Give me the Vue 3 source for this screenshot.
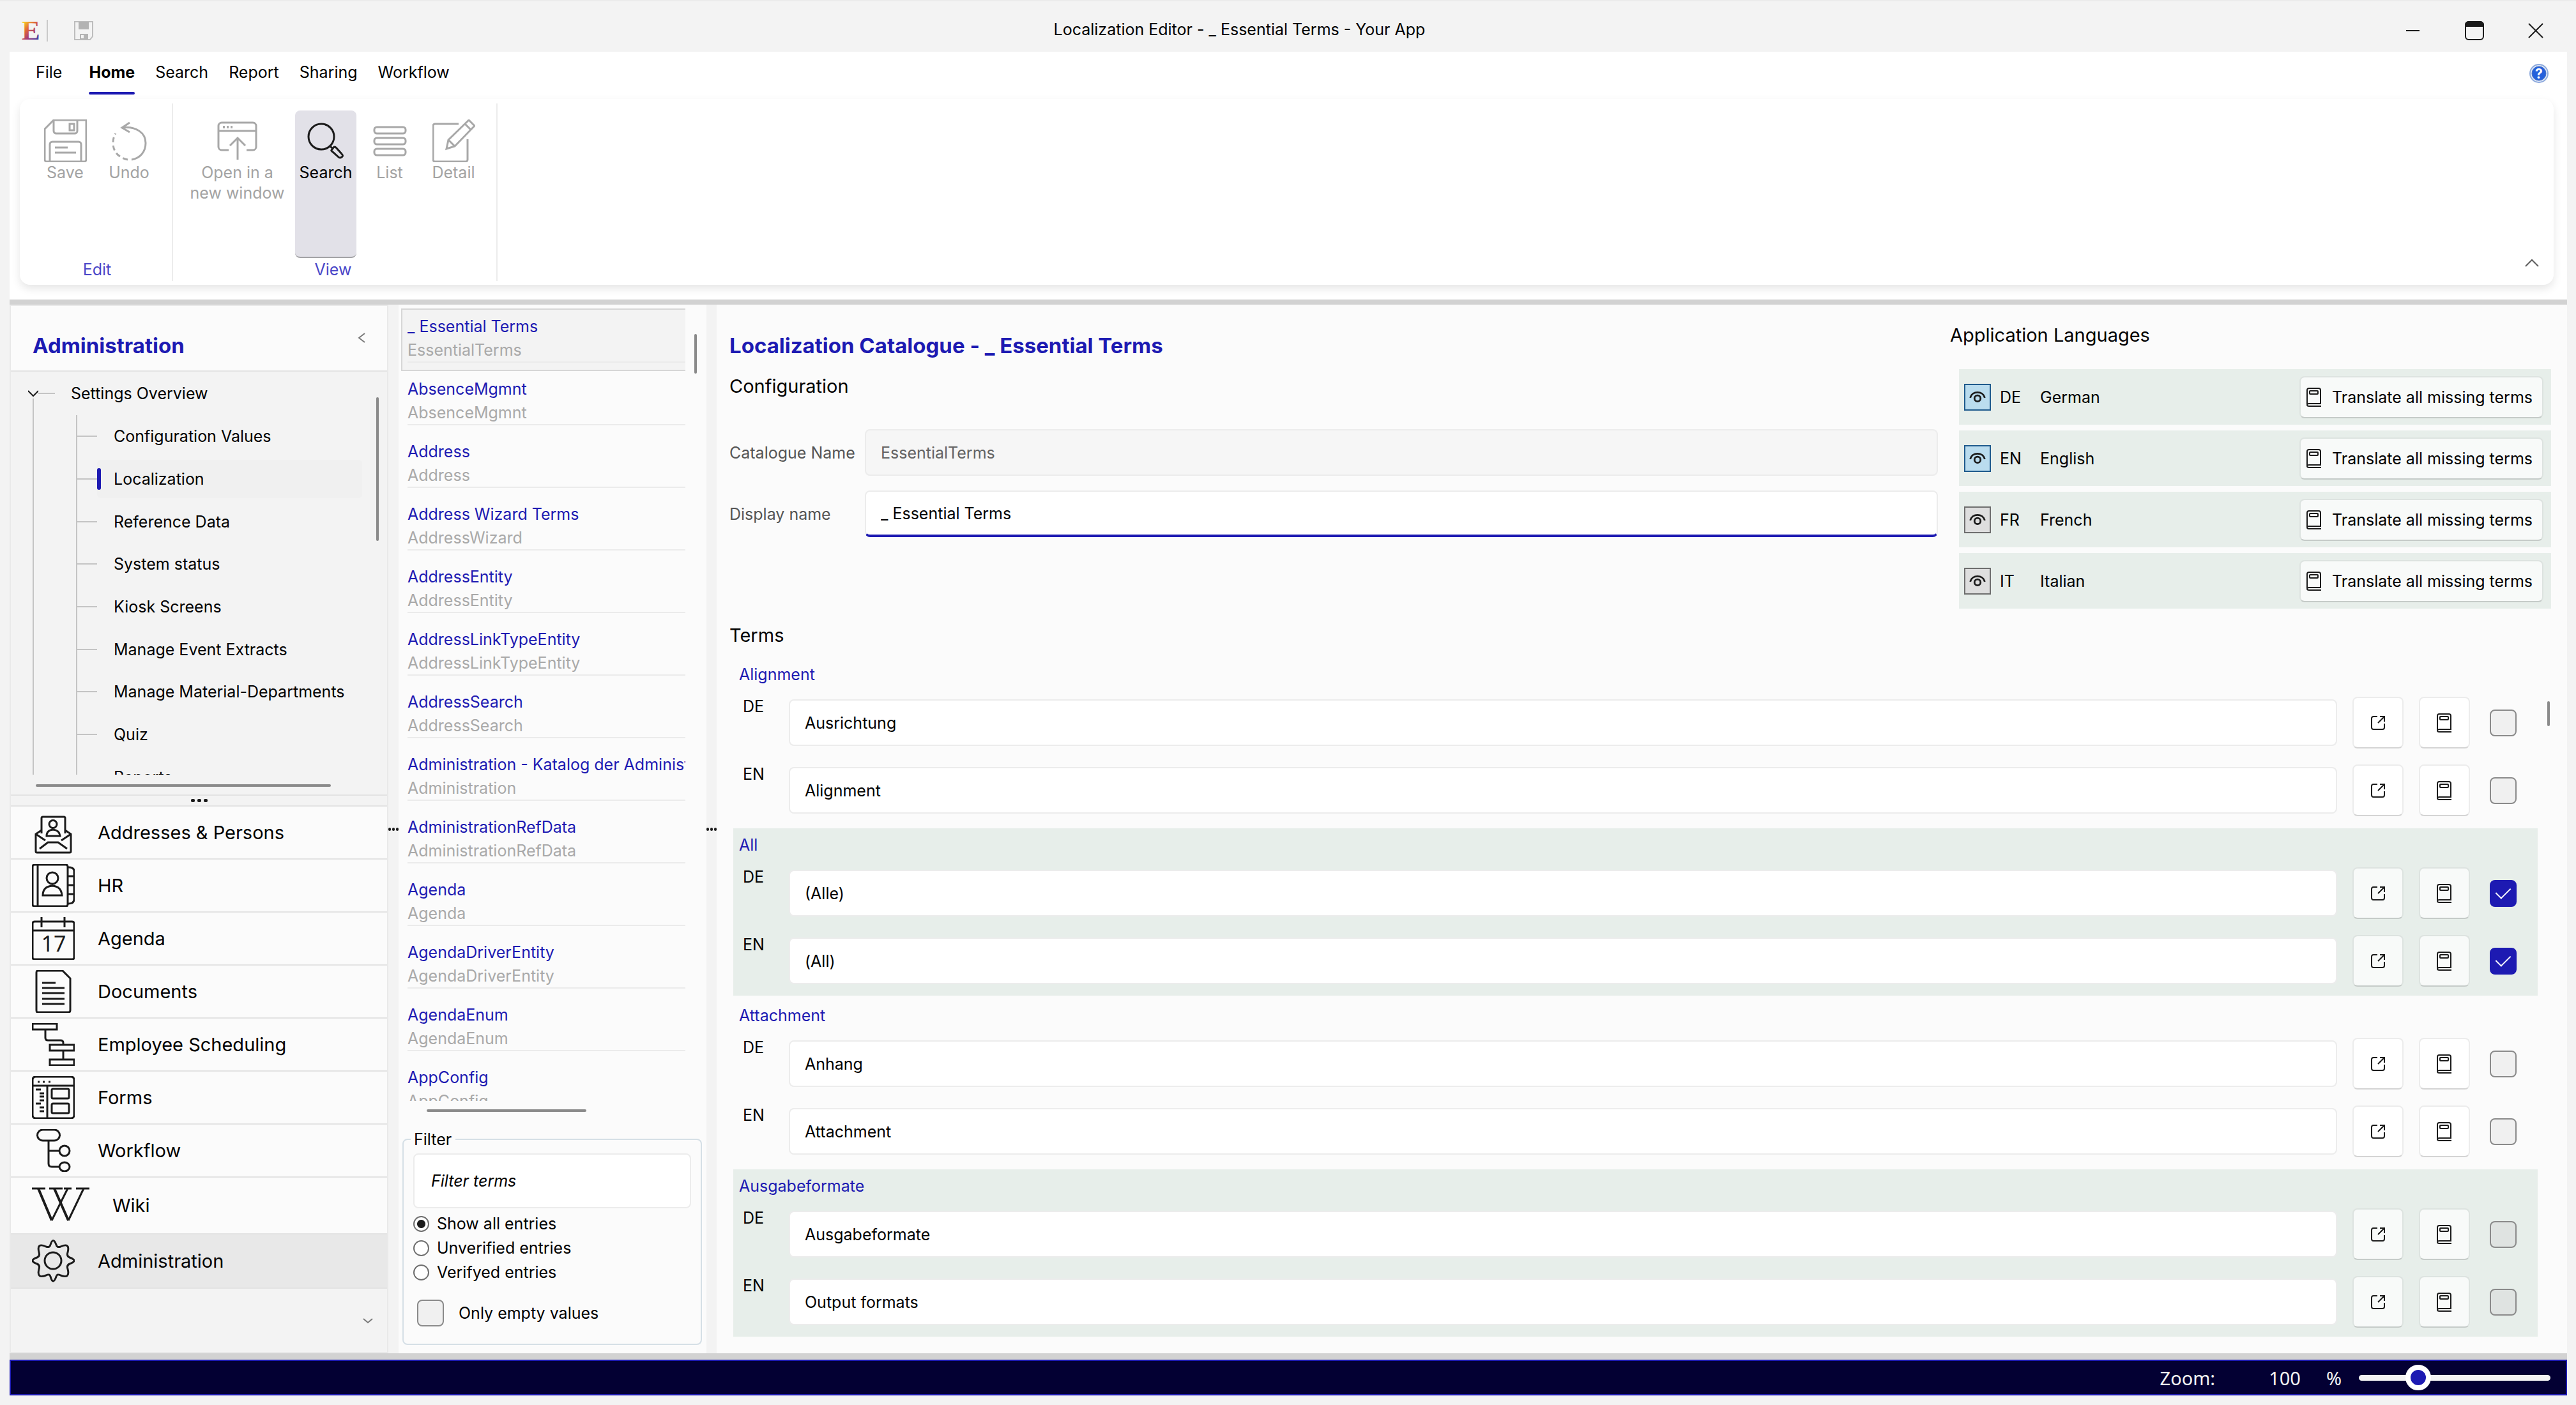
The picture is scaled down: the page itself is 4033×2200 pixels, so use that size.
<template>
  <div class="window">
    <header class="titlebar">
      <svg class="logo" viewBox="0 0 30 30" aria-hidden="true">
        <defs>
          <linearGradient id="logo-fill" gradientUnits="userSpaceOnUse" x1="2" y1="2" x2="28" y2="30">
            <stop offset="0" stop-color="#f9d423" />
            <stop offset="0.35" stop-color="#e0653a" />
            <stop offset="0.65" stop-color="#a03a7c" />
            <stop offset="1" stop-color="#2b3fa8" />
          </linearGradient>
        </defs>
        <text x="1" y="29" class="logo-letter" fill="url(#logo-fill)">E</text>
      </svg>
      <span class="titlebar-sep"></span>
      <button class="quick-save" aria-label="Save">
        <svg viewBox="0 0 30 30">
          <path d="M1 1h28v23l-4 5H1z" fill="none" stroke="#bdbdbd" stroke-width="2" />
          <path d="M7 1h16v12H7z M9 20h13v9H9z" fill="#b3b3b3" stroke="none" />
          <path d="M11 22h4v5h-4z" fill="#f3f3f3" stroke="none" />
        </svg>
      </button>
      <h1 class="window-title">Localization Editor - _ Essential Terms - Your App</h1>
      <div class="window-buttons">
        <button aria-label="Minimize">
          <svg viewBox="0 0 30 30"><path d="M4 15h21" /></svg>
        </button>
        <button aria-label="Maximize">
          <svg viewBox="0 0 30 30">
            <rect x="1" y="1" width="28" height="28" rx="5" />
            <path d="M1 8V6a5 5 0 0 1 5-5h18a5 5 0 0 1 5 5v2z" fill="#1b1b1b" />
          </svg>
        </button>
        <button aria-label="Close">
          <svg viewBox="0 0 30 30"><path d="M4 4l22 22M26 4L4 26" /></svg>
        </button>
      </div>
    </header>

    <section class="ribbon">
      <nav class="tabs">
        <button
          v-for="tab in tabs"
          :key="tab"
          :class="['tab', { 'tab--file': tab === 'File', 'tab--active': tab === activeTab }]"
          @click="activeTab = tab"
        >{{ tab }}</button>
        <button class="help" aria-label="Help">
          <svg viewBox="0 0 30 30">
            <circle cx="15" cy="15" r="14" fill="#dfe9f8" stroke="#8eaadd" stroke-width="2" />
            <circle cx="15" cy="15" r="11" fill="#2460dc" stroke="#4d74c4" stroke-width="1" />
            <text x="15" y="23" text-anchor="middle" class="help-mark">?</text>
          </svg>
        </button>
      </nav>
      <div class="ribbon-card">
        <div class="group">
          <div class="tools">
            <button class="tool" disabled>
              <svg viewBox="0 0 67 67">
                <path d="M15 1H65a1 1 0 0 1 1 1V63a3 3 0 0 1-3 3H4a3 3 0 0 1-3-3V15z" />
                <path d="M15 1v17a4 4 0 0 0 4 4h29a4 4 0 0 0 4-4V1M40 7h7v10h-7z" />
                <path d="M9 66V39a4 4 0 0 1 4-4h41a4 4 0 0 1 4 4v27M17 44h20M17 52h33" />
              </svg>
              <span>Save</span>
            </button>
            <button class="tool" disabled>
              <svg viewBox="0 0 67 67">
                <path d="M22 13C44 10 59 21 59 37C59 51 50 61 37 63" />
                <path d="M34 5L22 13l12 7" />
                <path d="M31 63C17 60 8 51 8 37C8 31 9 27 12 22" stroke-dasharray="8 5" />
              </svg>
              <span>Undo</span>
            </button>
          </div>
          <span class="group-name">Edit</span>
        </div>
        <div class="group group--view">
          <div class="tools">
            <button class="tool tool--wide" disabled>
              <svg viewBox="0 0 67 67">
                <path d="M20 48H9a5 5 0 0 1-5-5V10a5 5 0 0 1 5-5h49a5 5 0 0 1 5 5v33a5 5 0 0 1-5 5H48" />
                <path d="M4 18h59M34 63V29M22 41l12-12 12 12" />
                <path d="M11 12h3M17 12h3M23 12h3" stroke-width="4" />
              </svg>
              <span>Open in a<br />new window</span>
            </button>
            <button class="tool tool--on">
              <svg viewBox="0 0 67 67">
                <circle cx="26" cy="27" r="20" />
                <path d="M40 42l4 4M42 48l3-4q2-2 5 1l8 9q3 3 0 5t-5 0l-9-8q-3-2-2-3z" />
              </svg>
              <span>Search</span>
            </button>
            <button class="tool" disabled>
              <svg viewBox="0 0 67 67">
                <rect x="9" y="12" width="49" height="10" rx="4" />
                <rect x="9" y="29" width="49" height="10" rx="4" />
                <rect x="9" y="46" width="49" height="10" rx="4" />
              </svg>
              <span>List</span>
            </button>
            <button class="tool" disabled>
              <svg viewBox="0 0 67 67">
                <path d="M41 7H4a3 3 0 0 0-3 3v53a3 3 0 0 0 3 3h48a3 3 0 0 0 3-3V31" />
                <path d="M57 1l9 9-31 32-13 4 3-14zM51 7l9 9M25 32l10 10" />
              </svg>
              <span>Detail</span>
            </button>
          </div>
          <span class="group-name">View</span>
        </div>
        <button class="ribbon-collapse" aria-label="Collapse ribbon">
          <svg viewBox="0 0 24 24"><path d="M2 17L12 7l10 10" /></svg>
        </button>
      </div>
    </section>

    <main class="body">
      <aside class="sidebar">
        <div class="sidebar-head">
          <h2 class="heading">Administration</h2>
          <button aria-label="Collapse panel">
            <svg viewBox="0 0 16 16"><path d="M12 1L3 8l9 7" /></svg>
          </button>
        </div>
        <div class="tree">
          <div class="tree-clip">
            <button class="tree-root">
              <svg viewBox="0 0 16 16"><path d="M0 4l8 8 8-8" /></svg>
              <span>Settings Overview</span>
            </button>
            <ul class="tree-items">
              <li
                v-for="entry in settings"
                :key="entry"
                :class="{ selected: entry === selectedSetting }"
                @click="selectedSetting = entry"
              ><a href="#">{{ entry }}</a></li>
            </ul>
          </div>
          <span class="scroll scroll--tree-y"></span>
          <span class="scroll scroll--tree-x"></span>
        </div>
        <div class="grip"><i></i><i></i><i></i></div>
        <ul class="modules">
          <li
            v-for="mod in modules"
            :key="mod.name"
            :class="{ wiki: mod.name === 'Wiki', current: mod.name === 'Administration' }"
          >
            <a href="#">
              <svg v-if="mod.name === 'Wiki'" class="wiki-icon" viewBox="0 0 90 67">
                <path d="M0 7h21M27 7h21M50 7h12M69 7h21" stroke-width="3" />
                <path d="M10 7l21 50M35 7l22 50" stroke-width="4" />
                <path d="M31 57L56 7M57 57L81 7" stroke-width="3" />
              </svg>
              <svg v-else viewBox="0 0 67 67">
                <path v-for="d in mod.paths" :key="d" :d="d" />
                <text v-if="mod.day" x="34" y="54" text-anchor="middle" class="day">{{ mod.day }}</text>
              </svg>
              <span>{{ mod.name }}</span>
            </a>
          </li>
        </ul>
        <div class="sidebar-foot">
          <button aria-label="More modules">
            <svg viewBox="0 0 16 16"><path d="M1 5l7 6 7-6" /></svg>
          </button>
        </div>
      </aside>

      <div class="splitter"><i></i><i></i><i></i></div>

      <section class="catalogues">
        <ul class="catalogue-list">
          <li
            v-for="cat in catalogues"
            :key="cat.id"
            :class="{ selected: cat.id === selectedCatalogue }"
            @click="selectedCatalogue = cat.id"
          >
            <a href="#" class="cat-title">{{ cat.title }}</a>
            <span class="cat-id">{{ cat.id }}</span>
          </li>
        </ul>
        <div class="list-scroll"><span></span></div>
        <span class="scroll scroll--list-y"></span>
        <fieldset class="filter">
          <legend>Filter</legend>
          <input v-model="filter" class="filter-text" type="text" placeholder="Filter terms" aria-label="Filter terms" />
          <label v-for="mode in modes" :key="mode" class="radio">
            <input v-model="filterMode" type="radio" name="mode" :value="mode" />
            {{ mode }}
          </label>
          <label class="only-empty">
            <input v-model="onlyEmpty" type="checkbox" class="check" />
            Only empty values
          </label>
        </fieldset>
      </section>

      <div class="splitter"><i></i><i></i><i></i></div>

      <section class="editor">
        <div class="editor-top">
          <div class="config">
            <h2 class="heading">Localization Catalogue - _ Essential Terms</h2>
            <h3>Configuration</h3>
            <div class="fields">
              <label for="catalogue-name">Catalogue Name</label>
              <input id="catalogue-name" class="text" type="text" value="EssentialTerms" disabled />
              <label for="display-name">Display name</label>
              <input id="display-name" v-model="displayName" class="text text--focus" type="text" />
            </div>
          </div>
          <div class="languages">
            <h3>Application Languages</h3>
            <ul>
              <li v-for="lang in languages" :key="lang.code">
                <button
                  :class="['eye', { 'eye--on': lang.visible }]"
                  :aria-label="'Show ' + lang.name"
                  @click="lang.visible = !lang.visible"
                >
                  <svg viewBox="0 0 40 40">
                    <path d="M8 21C11 9 29 9 32 21" />
                    <circle cx="20" cy="22" r="5" />
                  </svg>
                </button>
                <span class="code">{{ lang.code }}</span>
                <span class="name">{{ lang.name }}</span>
                <button class="translate">
                  <svg class="book" viewBox="0 0 24 30">
                    <path d="M1 26V4q0-3 3-3h15q3 0 3 3v21H4q-3 0-3 2t3 2h19" />
                    <rect x="5" y="5" width="13" height="5" rx="1" />
                  </svg>
                  Translate all missing terms
                </button>
              </li>
            </ul>
          </div>
        </div>

        <h3 class="terms-title">Terms</h3>
        <div class="terms">
          <div v-for="(term, i) in terms" :key="term.key" :class="['term', { 'term--alt': i % 2 }]">
            <h4>{{ term.key }}</h4>
            <div v-for="row in term.rows" :key="row.lang" class="term-row">
              <label :for="term.key + row.lang">{{ row.lang }}</label>
              <input :id="term.key + row.lang" v-model="row.text" class="text" type="text" />
              <button class="square" aria-label="Open">
                <svg viewBox="0 0 24 24">
                  <path d="M11 2H5Q2 2 2 5v14q0 3 3 3h14q3 0 3-3v-6M15 2h7v8M22 2L12 12" />
                </svg>
              </button>
              <button class="square" aria-label="Translate">
                <svg class="book" viewBox="0 0 24 30">
                  <path d="M1 26V4q0-3 3-3h15q3 0 3 3v21H4q-3 0-3 2t3 2h19" />
                  <rect x="5" y="5" width="13" height="5" rx="1" />
                </svg>
              </button>
              <input v-model="row.verified" class="check" type="checkbox" aria-label="Verified" />
            </div>
          </div>
        </div>
        <span class="scroll scroll--terms"></span>
      </section>
    </main>

    <footer class="status">
      <label for="zoom">Zoom:</label>
      <output class="zoom-value">{{ zoom }}</output>
      <span class="percent">%</span>
      <input id="zoom" v-model="zoom" type="range" min="10" max="330" />
    </footer>
  </div>
</template>

<script setup>
import { ref, reactive } from 'vue';

const tabs = ['File', 'Home', 'Search', 'Report', 'Sharing', 'Workflow'];
const activeTab = ref('Home');

const settings = [
  'Configuration Values',
  'Localization',
  'Reference Data',
  'System status',
  'Kiosk Screens',
  'Manage Event Extracts',
  'Manage Material-Departments',
  'Quiz',
  'Reports',
];
const selectedSetting = ref('Localization');

const modules = [
  {
    name: 'Addresses & Persons',
    paths: [
      'M15 35V11q0-2 2-2h33q2 0 2 2v24',
      'M15 30L6 36v27q0 2 2 2h51q2 0 2-2V36l-9-6',
      'M6 36l15 10M61 36L46 46M12 59l13-10h16l14 10',
      'M27 20.5a6 6 0 1 0 12 0a6 6 0 1 0-12 0M23 39q0-9 10-10q10 1 11 10z',
    ],
  },
  {
    name: 'HR',
    paths: [
      'M4 1h49q3 0 3 3v59q0 3-3 3H4q-3 0-3-3V4q0-3 3-3zM9 1v65',
      'M23 22a9 9 0 1 0 18 0a9 9 0 1 0-18 0M17 49q0-14 15-15q14 1 15 15z',
      'M57 5q9 0 9 6v44q0 7-9 7M57 19h9M57 33h9M57 47h9',
    ],
  },
  {
    name: 'Agenda',
    day: '17',
    paths: ['M4 7h59q3 0 3 3v53q0 3-3 3H4q-3 0-3-3V10q0-3 3-3zM1 21h65', 'M15 0v16M51 0v16'],
  },
  {
    name: 'Documents',
    paths: ['M9 1h39l12 12v50q0 3-3 3H9q-2 0-2-3V4q0-3 2-3z', 'M16 20h21M16 28h35M16 36h35M16 45h35M16 53h35'],
  },
  {
    name: 'Employee Scheduling',
    paths: ['M1 1h38v9H1zM28 34h38v9H28zM28 57h38v9H28z', 'M21 10v13q0 4 4 4h20q4 0 4 4v3M49 43v14'],
  },
  {
    name: 'Forms',
    paths: [
      'M6 1h55q5 0 5 5v55q0 5-5 5H6q-5 0-5-5V6q0-5 5-5zM1 15h65M24 15v51',
      'M9 9h3M17 9h3M26 9h3M6 21h8M12 27h7M12 32h7M12 38h7M6 43h8M12 49h7M12 55h7',
      'M33 20h23q2 0 2 2v11q0 2-2 2H33q-2 0-2-2V22q0-2 2-2zM33 43h23q2 0 2 2v11q0 2-2 2H33q-2 0-2-2V45q0-2 2-2z',
    ],
  },
  {
    name: 'Workflow',
    paths: [
      'M17 1h18a8 8 0 0 1 0 17H17a8 8 0 0 1 0-17z',
      'M26 18v36q0 5 5 5h12M26 34h17',
      'M43 34a8 8 0 1 0 16 0a8 8 0 1 0-16 0M43 59a8 7 0 1 0 16 0a8 7 0 1 0-16 0',
    ],
  },
  { name: 'Wiki' },
  {
    name: 'Administration',
    paths: [
      'M29 8Q33-5 38 8Q39 13 45 11Q60 4 56 20Q54 26 59 28Q73 33 59 38Q54 40 56 46Q60 62 45 56Q39 53 38 58Q33 72 29 58Q28 53 22 56Q7 62 11 46Q13 40 8 38Q-6 33 8 28Q13 26 11 20Q7 4 22 11Q28 13 29 8z',
      'M20 33a13 13 0 1 0 26 0a13 13 0 1 0-26 0',
    ],
  },
];

const catalogues = [
  { title: '_ Essential Terms', id: 'EssentialTerms' },
  { title: 'AbsenceMgmnt', id: 'AbsenceMgmnt' },
  { title: 'Address', id: 'Address' },
  { title: 'Address Wizard Terms', id: 'AddressWizard' },
  { title: 'AddressEntity', id: 'AddressEntity' },
  { title: 'AddressLinkTypeEntity', id: 'AddressLinkTypeEntity' },
  { title: 'AddressSearch', id: 'AddressSearch' },
  { title: 'Administration - Katalog der Administration', id: 'Administration' },
  { title: 'AdministrationRefData', id: 'AdministrationRefData' },
  { title: 'Agenda', id: 'Agenda' },
  { title: 'AgendaDriverEntity', id: 'AgendaDriverEntity' },
  { title: 'AgendaEnum', id: 'AgendaEnum' },
  { title: 'AppConfig', id: 'AppConfig' },
];
const selectedCatalogue = ref('EssentialTerms');

const modes = ['Show all entries', 'Unverified entries', 'Verifyed entries'];
const filterMode = ref('Show all entries');
const filter = ref('');
const onlyEmpty = ref(false);

const displayName = ref('_ Essential Terms');
const zoom = ref(100);

const languages = reactive([
  { code: 'DE', name: 'German', visible: true },
  { code: 'EN', name: 'English', visible: true },
  { code: 'FR', name: 'French', visible: false },
  { code: 'IT', name: 'Italian', visible: false },
]);

const makeTerm = (key, de, en, verified) => ({
  key,
  rows: [
    { lang: 'DE', text: de, verified },
    { lang: 'EN', text: en, verified },
  ],
});

const terms = reactive([
  makeTerm('Alignment', 'Ausrichtung', 'Alignment', false),
  makeTerm('All', '(Alle)', '(All)', true),
  makeTerm('Attachment', 'Anhang', 'Attachment', false),
  makeTerm('Ausgabeformate', 'Ausgabeformate', 'Output formats', false),
]);
</script>

<style>
body {
  margin: 0;
  background: #f3f3f3;
}
</style>

<style scoped>
* {
  box-sizing: border-box;
}

.window {
  display: flex;
  flex-direction: column;
  height: 100vh;
  padding: 0 14px 15px 15px;
  border-top: 2px solid #ebebeb;
  background: #f3f3f3;
  color: #000;
  font-family: Inter, "Liberation Sans", sans-serif;
  font-size: 25px;
}

button,
input {
  font: inherit;
  color: inherit;
}

button {
  padding: 0;
  border: none;
  background: none;
  cursor: pointer;
}

ul,
h1,
h2,
h3,
h4 {
  margin: 0;
  padding: 0;
  list-style: none;
}

a {
  color: inherit;
  text-decoration: none;
}

svg {
  display: block;
  flex: none;
  fill: none;
  stroke: #1b1b1b;
  stroke-width: 2;
}

/* title bar */
.titlebar {
  display: flex;
  flex: none;
  align-items: center;
  height: 79px;
  padding: 12px 34px 0 18px;
}

.logo {
  width: 30px;
  height: 30px;
  overflow: visible;
  stroke: none;
}

.logo-letter {
  font-family: "Liberation Serif", serif;
  font-size: 43px;
  font-weight: bold;
}

.titlebar-sep {
  width: 2px;
  height: 34px;
  margin: 0 41px 0 10px;
  background: #c9c9c9;
}

.quick-save svg {
  width: 30px;
  height: 30px;
}

.window-title {
  flex: 1;
  padding: 0 28px 3px 0;
  font-size: 25px;
  font-weight: normal;
  text-align: center;
}

.window-buttons {
  display: flex;
  gap: 66px;
}

.window-buttons svg {
  width: 30px;
  height: 30px;
}

/* ribbon */
.ribbon {
  flex: none;
  padding: 0 21px 23px 16px;
  background: #fff;
}

.tabs {
  display: flex;
  height: 67px;
  margin-bottom: 7px;
  padding-left: 9px;
}

.tab {
  position: relative;
  padding: 0 16px 3px;
}

.tab--file {
  margin-right: 10px;
}

.tab--active {
  font-weight: bold;
}

.tab--active::after {
  content: "";
  position: absolute;
  right: 16px;
  bottom: 0;
  left: 16px;
  height: 4px;
  border-radius: 2px;
  background: #1d1ab2;
}

.help {
  margin: 0 8px 0 auto;
}

.help svg {
  width: 30px;
  height: 30px;
  stroke: none;
}

.help-mark {
  fill: #fff;
  font-size: 21px;
  font-weight: bold;
}

.ribbon-card {
  display: flex;
  padding: 7px 0 6px;
  border-radius: 16px;
  background: #fff;
  box-shadow: 0 6px 14px rgba(0, 0, 0, 0.1);
}

.group {
  display: flex;
  flex-direction: column;
  align-items: center;
  padding: 11px 19px 0 23px;
  border-right: 2px solid #ececec;
}

.group--view {
  padding-left: 14px;
}

.tools {
  display: flex;
  gap: 4px;
  height: 231px;
}

.tool {
  display: flex;
  flex-direction: column;
  align-items: center;
  width: 96px;
  padding-top: 14px;
  border-radius: 8px;
  line-height: 32px;
}

.tool:disabled {
  color: #a3a3a3;
}

.tool--wide {
  width: 173px;
}

.tool--on {
  border-bottom: 2px solid #a3a3a6;
  background: #e2e1e8;
}

.tool svg {
  width: 67px;
  height: 67px;
  stroke-width: 3;
}

.tool:disabled svg {
  stroke: #a8a8a8;
}

.group-name {
  color: #4a47c8;
  line-height: 36px;
}

.ribbon-collapse {
  align-self: flex-end;
  margin: 0 22px 16px auto;
}

.ribbon-collapse svg {
  width: 24px;
  height: 24px;
  stroke: #5c5c5c;
}

/* panes */
.body {
  display: flex;
  flex: 1;
  min-height: 0;
  border-top: 8px solid #d2d2d2;
  border-bottom: 10px solid #d2d2d2;
  background: #fbfbfb;
}

.heading {
  color: #1d1ab2;
  font-size: 33px;
  font-weight: bold;
}

h3 {
  font-size: 29px;
  font-weight: normal;
  line-height: 64px;
}

.scroll {
  position: absolute;
  border-radius: 4px;
  background: #8a8a8a;
}

.splitter {
  display: flex;
  flex: none;
  align-items: center;
  justify-content: space-between;
  width: 16px;
  background: #f3f3f3;
}

.splitter i,
.grip i {
  width: 4px;
  height: 5px;
  border-radius: 2px;
  background: #1b1b1b;
}

/* administration sidebar */
.sidebar {
  display: flex;
  flex: none;
  flex-direction: column;
  width: 593px;
  border: 2px solid #e9e9e9;
  background: #f3f3f3;
}

.sidebar-head {
  display: flex;
  flex: none;
  align-items: flex-start;
  justify-content: space-between;
  height: 103px;
  padding: 42px 31px 0 34px;
  border-bottom: 2px solid #e3e3e3;
  background: #fbfbfb;
}

.sidebar-head svg,
.sidebar-foot svg,
.tree-root svg {
  width: 16px;
  height: 16px;
}

.tree {
  position: relative;
  flex: 1;
  min-height: 0;
  padding-bottom: 31px;
  border-bottom: 2px solid #e3e3e3;
}

.tree-clip {
  position: relative;
  height: 100%;
  padding-left: 27px;
  overflow: hidden;
}

.tree-clip::before {
  content: "";
  position: absolute;
  top: 42px;
  bottom: 0;
  left: 34px;
  width: 2px;
  background: #c4c4c4;
}

.tree-root {
  display: flex;
  align-items: center;
  height: 68px;
}

.tree-root::after {
  content: "";
  order: 1;
  width: 26px;
  height: 2px;
  background: #c4c4c4;
}

.tree-root span {
  order: 2;
  margin-left: 25px;
}

.tree-items {
  display: flex;
  flex-direction: column;
  height: 600px;
  margin: 0 39px 0 75px;
  border-left: 2px solid #c4c4c4;
}

.tree-items li {
  display: flex;
  flex: 1;
  align-items: center;
}

.tree-items li::before {
  content: "";
  width: 31px;
  height: 2px;
  background: #c4c4c4;
}

.tree-items a {
  display: flex;
  flex: 1;
  align-items: center;
  height: 60px;
  border-radius: 6px;
  white-space: nowrap;
}

.tree-items a::before {
  content: "";
  width: 6px;
  height: 34px;
  margin-right: 20px;
  border-radius: 3px;
}

.tree-items .selected a {
  background: #f0f0f0;
}

.tree-items .selected a::before {
  background: #1d1ab2;
}

.scroll--tree-y {
  top: 40px;
  right: 13px;
  width: 4px;
  height: 225px;
}

.scroll--tree-x {
  right: 88px;
  bottom: 12px;
  left: 39px;
  height: 4px;
}

.grip {
  display: flex;
  flex: none;
  align-items: center;
  justify-content: center;
  gap: 4px;
  height: 17px;
  border-bottom: 2px solid #e3e3e3;
}

.grip i {
  width: 6px;
}

.modules {
  background: #fbfbfb;
  font-size: 29px;
}

.modules li {
  border-bottom: 2px solid #e3e3e3;
}

.modules a {
  display: flex;
  align-items: center;
  gap: 36px;
  height: 81px;
  padding-left: 33px;
}

.modules svg {
  width: 67px;
  height: 67px;
  stroke-width: 3;
}

.modules .wiki a {
  height: 87px;
}

.modules .wiki-icon {
  width: 90px;
}

.modules .current a {
  height: 83px;
}

.modules .current {
  background: #e8e8e8;
}

.day {
  fill: #1b1b1b;
  stroke: none;
  font-family: "Noto Sans", sans-serif;
  font-size: 34px;
}

.sidebar-foot {
  display: flex;
  flex: none;
  align-items: center;
  justify-content: flex-end;
  height: 99px;
  padding-right: 22px;
}

.sidebar-foot svg,
.sidebar-head svg {
  stroke: #7a7a7a;
}

/* catalogue list */
.catalogues {
  position: relative;
  display: flex;
  flex: none;
  flex-direction: column;
  width: 482px;
  padding: 6px 5px 13px 4px;
}

.catalogue-list {
  flex: 1;
  min-height: 0;
  margin-right: 28px;
  overflow: hidden;
}

.catalogue-list li {
  height: 98px;
  padding: 7px 0 0 8px;
  border: 2px solid transparent;
  border-right: none;
  white-space: nowrap;
}

.catalogue-list .selected {
  border-color: #d6d6d6;
  background: #f3f3f3;
}

.cat-title {
  display: block;
  color: #1d1ab2;
  line-height: 38px;
}

.cat-id {
  display: block;
  border-bottom: 2px solid #ebebeb;
  color: #a9a9a9;
  line-height: 36px;
}

.list-scroll {
  flex: none;
  height: 41px;
  padding: 13px 0 0 40px;
}

.list-scroll span {
  display: block;
  width: 250px;
  height: 4px;
  border-radius: 4px;
  background: #8a8a8a;
}

.scroll--list-y {
  top: 46px;
  right: 15px;
  width: 4px;
  height: 62px;
}

.filter {
  display: flex;
  flex: none;
  flex-direction: column;
  min-width: 0;
  margin: 0 2px;
  padding: 3px 15px 27px;
  border: 2px solid #d5dfe6;
  border-radius: 8px;
}

.filter legend {
  margin-left: -4px;
  padding: 0 6px 0 5px;
  line-height: 38px;
}

.filter-text {
  width: 100%;
  height: 86px;
  margin-bottom: 5px;
  padding: 0 26px;
  border: 2px solid #ececec;
  border-radius: 8px;
  background: #fff;
}

.filter-text::placeholder {
  color: #000;
  font-style: italic;
  opacity: 1;
}

.radio,
.only-empty {
  display: flex;
  align-items: center;
  gap: 12px;
  height: 38px;
}

.radio input {
  appearance: none;
  width: 25px;
  height: 25px;
  margin: 0;
  border: 2px solid #6e6e6e;
  border-radius: 50%;
  background: #fff;
}

.radio input:checked {
  background: radial-gradient(circle, #1b1b1b 6px, #fff 7px);
}

.only-empty {
  gap: 23px;
  height: 42px;
  margin: 24px 0 0 6px;
}

.check {
  display: grid;
  place-items: center;
  flex: none;
  appearance: none;
  width: 42px;
  height: 42px;
  margin: 0;
  border: 2px solid #8a8a8a;
  border-radius: 8px;
  background: #f0f0f0;
}

.term--alt .check {
  background: #dfe3e1;
}

.check:checked,
.term--alt .check:checked {
  border-color: #1d1ab2;
  background: #1d1ab2;
}

.check:checked::after {
  content: "";
  width: 20px;
  height: 11px;
  margin-bottom: 6px;
  border: solid #fff;
  border-width: 0 0 2px 2px;
  transform: rotate(-45deg);
}

/* editor */
.editor {
  position: relative;
  display: flex;
  flex: 1;
  flex-direction: column;
  min-width: 0;
  padding-left: 20px;
}

.editor-top {
  display: flex;
  gap: 19px;
  padding-right: 25px;
}

.config {
  flex: 1;
  padding-top: 32px;
}

.config .heading {
  line-height: 64px;
}

.fields {
  display: grid;
  grid-template-columns: 212px 1fr;
  row-gap: 23px;
  align-items: center;
  margin-top: 35px;
}

.fields label {
  color: #555;
}

.text {
  min-width: 0;
  height: 73px;
  padding: 0 23px;
  border: 2px solid #ececec;
  border-radius: 8px;
  background: #fff;
}

.text:disabled {
  background: #f6f6f6;
  color: #636363;
}

.text--focus {
  border-bottom: 4px solid #1d1ab2;
}

.languages {
  flex: none;
  width: 941px;
  padding-top: 16px;
}

.languages ul {
  display: flex;
  flex-direction: column;
  gap: 9px;
  margin: 21px 0 0 14px;
}

.languages li {
  display: flex;
  align-items: center;
  height: 87px;
  padding: 0 12px 0 8px;
  background: #e7eeea;
}

.eye {
  border: 2px solid #6e6e6e;
  background: #dedede;
}

.eye--on {
  border-color: #1f5a8c;
  background: #badcee;
}

.eye svg {
  width: 38px;
  height: 38px;
  stroke-width: 3;
}

.code {
  width: 63px;
  margin-left: 14px;
}

.name {
  flex: 1;
}

.translate {
  display: flex;
  align-items: center;
  gap: 16px;
  height: 66px;
  padding: 0 15px 0 9px;
  border: 2px solid #dde3e0;
  border-bottom-color: #c5cbc8;
  border-radius: 8px;
  background: #f8faf9;
}

.book {
  width: 24px;
  height: 30px;
}

.terms-title {
  margin: 10px 0 3px;
}

.terms {
  display: flex;
  flex: 1;
  flex-direction: column;
  gap: 5px;
  min-height: 0;
  padding: 0 46px 0 6px;
  overflow: hidden;
}

.term {
  padding: 8px 33px 14px 9px;
}

.term--alt {
  background: #e7eeea;
}

.term h4 {
  margin-bottom: 17px;
  color: #1d1ab2;
  font-size: 25px;
  font-weight: normal;
  line-height: 36px;
}

.term-row {
  display: flex;
  align-items: center;
  height: 81px;
  padding-left: 6px;
}

.term-row + .term-row {
  margin-top: 25px;
}

.term-row label {
  align-self: flex-start;
  width: 72px;
  line-height: 30px;
}

.term-row .text {
  flex: 1;
}

.square {
  display: grid;
  place-items: center;
  width: 80px;
  height: 81px;
  margin-left: 24px;
  border: 2px solid #ececec;
  border-bottom-color: #d4d4d4;
  border-radius: 8px;
  background: #fff;
}

.term--alt .square {
  border-color: #dde3e0;
  border-bottom-color: #c5cbc8;
  background: #f8faf9;
}

.square svg {
  width: 24px;
  height: 24px;
}

.square .book {
  height: 30px;
}

.term-row .check {
  margin-left: 31px;
}

.scroll--terms {
  top: 621px;
  right: 27px;
  width: 4px;
  height: 39px;
}

/* status bar */
.status {
  display: flex;
  flex: none;
  align-items: center;
  justify-content: flex-end;
  height: 56px;
  padding-right: 24px;
  border: 2px solid #1d1ab2;
  background: #030033;
  color: #f3f3f3;
  font-family: "Noto Sans", sans-serif;
  font-size: 29px;
}

.zoom-value {
  margin: 0 40px 0 84px;
}

.percent {
  margin-right: 27px;
}

.status input {
  appearance: none;
  width: 300px;
  height: 9px;
  margin: 0;
  border-radius: 5px;
  background: #f3f3f3;
}

.status input::-webkit-slider-thumb {
  appearance: none;
  width: 40px;
  height: 40px;
  border: 8px solid #fff;
  border-radius: 50%;
  background: #1d1ab2;
}
</style>
